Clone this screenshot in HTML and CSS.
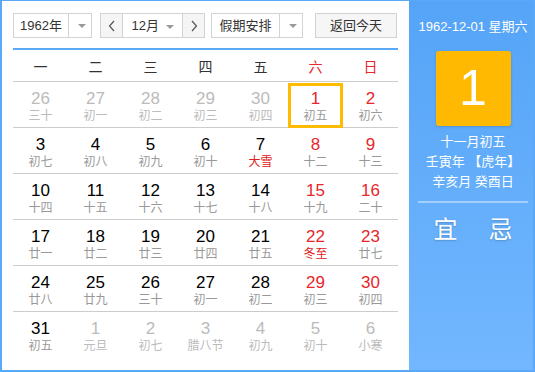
FILE: index.html
```html
<!DOCTYPE html>
<html lang="zh-CN">
<head>
    <meta charset="UTF-8">
    <title>万年历</title>
    <link rel="stylesheet" href="styles.css">
</head>
<body>
    <div class="calendar">
        <div class="left">
            <div class="toolbar">
                <div class="select year">
                    <span class="value">1962年</span>
                    <span class="drop"><i class="tri"></i></span>
                </div>
                <div class="select month">
                    <span class="btn"><svg width="8" height="12" viewBox="0 0 8 12"><polyline points="6,1 1.5,6 6,11" fill="none" stroke="#555" stroke-width="1.2"/></svg></span>
                    <span class="value">12月 <i class="tri"></i></span>
                    <span class="btn"><svg width="8" height="12" viewBox="0 0 8 12"><polyline points="2,1 6.5,6 2,11" fill="none" stroke="#555" stroke-width="1.2"/></svg></span>
                </div>
                <div class="select holiday">
                    <span class="value">假期安排</span>
                    <span class="drop"><i class="tri"></i></span>
                </div>
                <div class="today-btn">返回今天</div>
            </div>

            <div class="week">
                <span>一</span><span>二</span><span>三</span><span>四</span><span>五</span><span class="red">六</span><span class="red">日</span>
            </div>

            <div class="days">
                <div class="day other"><b>26</b><em>三十</em></div>
                <div class="day other"><b>27</b><em>初一</em></div>
                <div class="day other"><b>28</b><em>初二</em></div>
                <div class="day other"><b>29</b><em>初三</em></div>
                <div class="day other"><b>30</b><em>初四</em></div>
                <div class="day weekend selected"><b>1</b><em>初五</em></div>
                <div class="day weekend"><b>2</b><em>初六</em></div>

                <div class="day"><b>3</b><em>初七</em></div>
                <div class="day"><b>4</b><em>初八</em></div>
                <div class="day"><b>5</b><em>初九</em></div>
                <div class="day"><b>6</b><em>初十</em></div>
                <div class="day"><b>7</b><em class="term">大雪</em></div>
                <div class="day weekend"><b>8</b><em>十二</em></div>
                <div class="day weekend"><b>9</b><em>十三</em></div>

                <div class="day"><b>10</b><em>十四</em></div>
                <div class="day"><b>11</b><em>十五</em></div>
                <div class="day"><b>12</b><em>十六</em></div>
                <div class="day"><b>13</b><em>十七</em></div>
                <div class="day"><b>14</b><em>十八</em></div>
                <div class="day weekend"><b>15</b><em>十九</em></div>
                <div class="day weekend"><b>16</b><em>二十</em></div>

                <div class="day"><b>17</b><em>廿一</em></div>
                <div class="day"><b>18</b><em>廿二</em></div>
                <div class="day"><b>19</b><em>廿三</em></div>
                <div class="day"><b>20</b><em>廿四</em></div>
                <div class="day"><b>21</b><em>廿五</em></div>
                <div class="day weekend"><b>22</b><em class="term">冬至</em></div>
                <div class="day weekend"><b>23</b><em>廿七</em></div>

                <div class="day"><b>24</b><em>廿八</em></div>
                <div class="day"><b>25</b><em>廿九</em></div>
                <div class="day"><b>26</b><em>三十</em></div>
                <div class="day"><b>27</b><em>初一</em></div>
                <div class="day"><b>28</b><em>初二</em></div>
                <div class="day weekend"><b>29</b><em>初三</em></div>
                <div class="day weekend"><b>30</b><em>初四</em></div>

                <div class="day last"><b>31</b><em>初五</em></div>
                <div class="day other last"><b>1</b><em>元旦</em></div>
                <div class="day other last"><b>2</b><em>初七</em></div>
                <div class="day other last"><b>3</b><em>腊八节</em></div>
                <div class="day other last"><b>4</b><em>初九</em></div>
                <div class="day other last"><b>5</b><em>初十</em></div>
                <div class="day other last"><b>6</b><em>小寒</em></div>
            </div>
        </div>

        <div class="side">
            <div class="date">1962-12-01 星期六</div>
            <div class="big-day">1</div>
            <div class="lunar">
                <p>十一月初五</p>
                <p>壬寅年 【虎年】</p>
                <p>辛亥月 癸酉日</p>
            </div>
            <div class="divider"></div>
            <div class="yiji"><span>宜</span><span>忌</span></div>
        </div>
    </div>
</body>
</html>
```

FILE: styles.css
```css
* {
    box-sizing: border-box;
}

body {
    margin: 0;
    font-family: "Liberation Sans", "Noto Sans CJK SC", sans-serif;
    color: #333;
}

.calendar {
    width: 535px;
    height: 372px;
    border: 2px solid #5aa9f8;
    border-top-width: 1px;
    display: flex;
    background: #fff;
}

.left {
    width: 407px;
    padding: 12px 11px 0 11px;
}

/* top bar */
.toolbar {
    display: flex;
    height: 25px;
}

.select {
    display: flex;
    border: 1px solid #d3d3d3;
    height: 25px;
    font-size: 13px;
    line-height: 23px;
    color: #333;
}

.select .value {
    flex: 1;
    text-align: center;
}

.select .drop {
    width: 23px;
    border-left: 1px solid #d3d3d3;
    display: flex;
    align-items: center;
    justify-content: center;
}

.tri {
    display: inline-block;
    width: 0;
    height: 0;
    border-left: 4px solid transparent;
    border-right: 4px solid transparent;
    border-top: 4px solid #999;
    vertical-align: middle;
    margin-left: 3px;
}

.year {
    width: 79px;
}

.month {
    width: 105px;
    margin-left: 8px;
}

.month .btn {
    width: 22px;
    background: #f5f5f5;
    display: flex;
    align-items: center;
    justify-content: center;
}

.month .btn:first-child {
    border-right: 1px solid #d3d3d3;
}

.month .btn:last-child {
    border-left: 1px solid #d3d3d3;
}

.holiday {
    width: 92px;
    margin-left: 6px;
}

.today-btn {
    width: 82px;
    margin-left: 12px;
    border: 1px solid #d3d3d3;
    background: #f6f6f6;
    font-size: 13px;
    line-height: 23px;
    text-align: center;
    color: #333;
}

/* weekday header */
.week {
    margin-top: 10px;
    border-top: 2px solid #5aa9f8;
    border-bottom: 1px solid #ccc;
    display: grid;
    grid-template-columns: repeat(7, 55px);
    height: 34px;
    font-size: 14px;
    line-height: 34px;
    text-align: center;
}

.red {
    color: #e8262c;
}

/* day grid */
.days {
    display: grid;
    grid-template-columns: repeat(7, 55px);
}

.day {
    height: 46px;
    border-bottom: 1px solid #ccc;
    text-align: center;
    padding-top: 7px;
}

.day.last {
    border-bottom: none;
}

.day b {
    display: block;
    font-weight: normal;
    font-size: 17px;
    line-height: 20px;
    color: #000;
}

.day em {
    display: block;
    font-style: normal;
    font-size: 12px;
    line-height: 14px;
    color: #999;
}

.day.weekend b {
    color: #e8262c;
}

.day.other b,
.day.other em {
    color: #bbb;
}

.day em.term {
    color: #e02020;
}

.day.selected {
    box-shadow: inset 0 0 0 3px #ffbb00;
    height: 45px;
    margin-top: 1px;
    border-bottom: none;
    padding-top: 6px;
}

.day.selected + .day {
    border-bottom: 1px solid #ccc;
}

/* right panel */
.side {
    flex: 1;
    background: linear-gradient(#55a4f7, #72b7ff);
    color: #fff;
    padding-left: 4px;
    text-align: center;
    display: flex;
    flex-direction: column;
    align-items: center;
}

.date {
    margin-top: 16px;
    font-size: 13px;
    line-height: 20px;
}

.big-day {
    margin-top: 14px;
    width: 75px;
    height: 75px;
    background: #ffb900;
    border-radius: 3px;
    font-size: 50px;
    line-height: 75px;
    box-shadow: 0 1px 3px rgba(0, 0, 0, 0.15);
}

.lunar {
    margin-top: 6px;
    font-size: 13px;
    line-height: 20px;
}

.lunar p {
    margin: 0;
}

.divider {
    margin-top: 9px;
    width: 110px;
    height: 2px;
    background: #a3cffc;
}

.yiji {
    margin-top: 12px;
    display: flex;
    gap: 31px;
    font-size: 24px;
    line-height: 30px;
    text-shadow: 0 1px 2px rgba(0, 0, 0, 0.2);
}
```
